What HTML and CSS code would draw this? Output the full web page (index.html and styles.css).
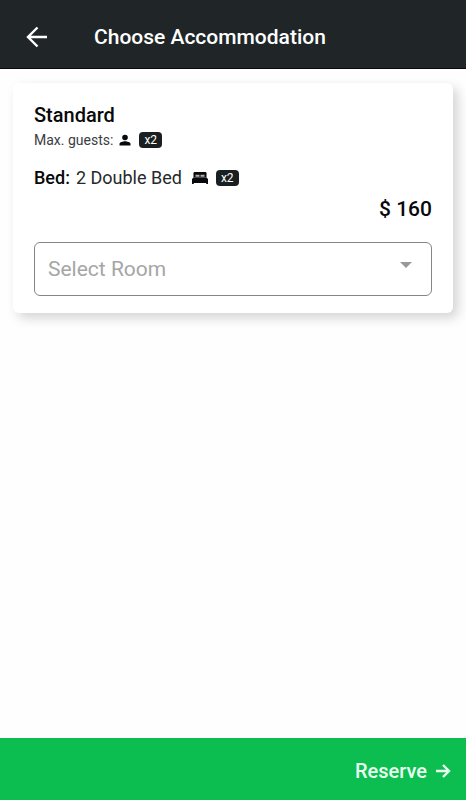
FILE: index.html
```html
<!DOCTYPE html>
<html lang="en">
<head>
<meta charset="utf-8">
<meta name="viewport" content="width=device-width, initial-scale=1">
<title>Choose Accommodation</title>
<link rel="stylesheet" href="styles.css">
</head>
<body>
<header class="app-bar">
  <button class="back" type="button" aria-label="Back">
    <svg width="22" height="22" viewBox="0 0 22 22" fill="none" stroke="currentColor" stroke-width="2.4"><path d="M21 11H2.5M11.5 1.5L2 11l9.500 9.500"/></svg>
  </button>
  <h1 class="app-title">Choose Accommodation</h1>
</header>
<main class="content">
  <article class="card">
    <h2 class="room-type">Standard</h2>
    <p class="guests">
      <span>Max. guests:</span>
      <svg width="12" height="12" viewBox="0 0 12 12" fill="currentColor"><circle cx="6" cy="3.500" r="2.800"/><path d="M.5 11.500V10C.5 8.200 4 7.300 6 7.300s5.500.9 5.500 2.700v1.500z"/></svg>
      <span class="badge">x2</span>
    </p>
    <p class="beds">
      <strong>Bed:</strong>
      <span>2 Double Bed</span>
      <svg class="bed-icon" width="16" height="14" viewBox="0 0 16 14" fill="currentColor"><path d="M1.500 6.500V2.200Q1.500 1 2.700 1h10.600Q14.500 1 14.500 2.200v4.300z"/><path d="M3.500 3.800h4v2h-4zM8.500 3.800h4v2h-4z" fill="#aeb1b2"/><path d="M1.500 6.500h13L16 8v5h-1.500l-.5-1H2l-.5 1H0V8z"/></svg>
      <span class="badge">x2</span>
    </p>
    <p class="price">$ 160</p>
    <div class="select-wrap">
      <select class="room-select" aria-label="Select Room">
        <option>Select Room</option>
      </select>
      <svg class="caret" width="12" height="6" viewBox="0 0 12 6" fill="currentColor"><path d="M0 0h12L6 6z"/></svg>
    </div>
  </article>
</main>
<footer class="footer">
  <button class="reserve" type="button">
    <span>Reserve</span>
    <svg width="16" height="14" viewBox="0 0 16 14" fill="none" stroke="currentColor" stroke-width="2.400"><path d="M1 7h12.500M8 1l6 6-6 6"/></svg>
  </button>
</footer>
</body>
</html>
```
FILE: styles.css
```css
* { box-sizing: border-box; }
body {
  margin: 0;
  min-height: 100vh;
  display: flex;
  flex-direction: column;
  background: #fefefe;
  color: #08090a;
  font-family: Roboto, "Liberation Sans", sans-serif;
}
h1, h2, p { margin: 0; }
svg { display: block; flex: none; }
button { font: inherit; color: inherit; background: none; border: 0; padding: 0; }
.app-bar {
  display: flex;
  align-items: center;
  gap: 46px;
  padding: 23px 26px 17px;
  background: #202628;
  border-bottom: 1px solid #080b0c;
  color: #fff;
}
.app-title { font-size: 21px; line-height: 28px; font-weight: 500; }
.content { flex: 1; padding: 14px 13px; }
.card {
  padding: 20px 21px 17px;
  background: #fff;
  border-radius: 6px;
  box-shadow: 5px 5px 12px rgba(0, 0, 0, 0.17);
}
.room-type { font-size: 20px; line-height: 24px; font-weight: 500; }
.guests {
  display: flex;
  align-items: center;
  gap: 6px;
  margin-top: 3px;
  font-size: 14px;
  line-height: 20px;
}
.guests span:first-child { color: #3a3d3f; }
.guests .badge { margin-left: 2px; }
.beds {
  display: flex;
  align-items: center;
  gap: 6px;
  margin-top: 16px;
  font-size: 18px;
  line-height: 24px;
}
.beds span:not(.badge) { color: #26292b; }
.beds strong { font-weight: 500; }
.bed-icon { margin: 0 2px 0 4px; }
.badge {
  padding: 0 5px;
  border-radius: 4px;
  background: #1a1f21;
  color: #fff;
  font-size: 12px;
  line-height: 16px;
}
.price {
  margin-top: 7px;
  font-size: 21px;
  line-height: 24px;
  font-weight: 500;
  text-align: right;
}
.select-wrap { position: relative; margin-top: 21px; }
.room-select {
  display: block;
  width: 100%;
  height: 54px;
  padding: 0 40px 0 13px;
  appearance: none;
  border: 1px solid #858585;
  border-radius: 6px;
  background: #fff;
  color: #a6a6a6;
  font: 400 21px/24px Roboto, "Liberation Sans", sans-serif;
}
.caret { position: absolute; top: 20px; right: 20px; color: #999; pointer-events: none; }
.footer {
  display: flex;
  justify-content: flex-end;
  padding: 21px 15px 17px;
  background: #0cbd50;
}
.reserve {
  display: flex;
  align-items: center;
  gap: 8px;
  color: #e8fff0;
  font-size: 20px;
  line-height: 24px;
  font-weight: 500;
}
```
